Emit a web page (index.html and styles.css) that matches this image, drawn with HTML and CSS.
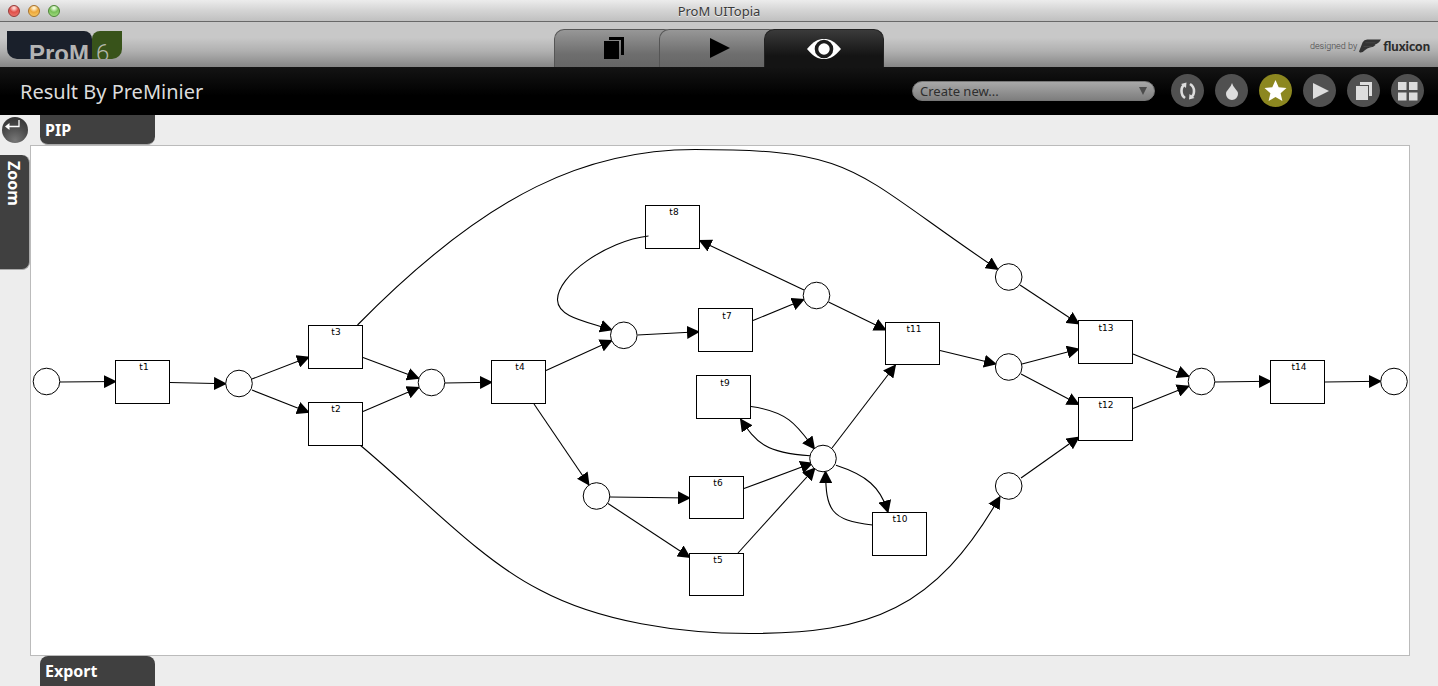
FILE: index.html
```html
<!DOCTYPE html>
<html lang="en">
<head>
<meta charset="utf-8">
<title>ProM UITopia</title>
<link rel="stylesheet" href="styles.css">
</head>
<body>
<div class="titlebar">
  <div class="lights">
    <button class="light red" aria-label="Close"></button>
    <button class="light amber" aria-label="Minimize"></button>
    <button class="light green" aria-label="Zoom window"></button>
  </div>
  <span class="window-title">ProM UITopia</span>
</div>

<header class="header">
  <div class="logo"><span class="logo-name">ProM</span><span class="logo-version">6</span></div>
  <nav class="tabs">
    <button class="tab" aria-label="Workspace">
      <svg width="22" height="24" viewBox="0 0 22 24"><path d="M6 0H21V18H18V3H6Z"/><path d="M1 4H16V22H1Z"/></svg>
    </button>
    <button class="tab" aria-label="Actions">
      <svg width="22" height="22" viewBox="0 0 22 22"><path d="M2 0L22 10L2 20Z"/></svg>
    </button>
    <button class="tab active" aria-label="Views">
      <svg width="36" height="22" viewBox="0 0 36 22"><path fill="#fff" d="M1 11C8 3 12 1 18 1S28 3 35 11C28 19 24 21 18 21S8 19 1 11Z"/><circle cx="18" cy="11" r="7.500" fill="#fff" stroke="#1c1c1c" stroke-width="3.600"/></svg>
    </button>
  </nav>
  <div class="credit">
    <span class="credit-by">designed by</span>
    <svg class="credit-mark" width="24" height="16" viewBox="0 0 24 16"><path fill="#333" d="M0 14L4 4Q5.500 1 9 1H24Q21 6 17 6.500L18 7Q16 9.500 12 9.500Q9 10 6 13Q4 15.500 1 15Z"/><path d="M7 4.500H18M5 8.500H14" stroke="#4c4c4c" stroke-width=".8" fill="none"/></svg>
    <span class="credit-name">fluxicon</span>
  </div>
</header>

<div class="toolbar">
  <h1 class="heading">Result By PreMinier</h1>
  <div class="picker">
    <select class="picker-select" aria-label="Create new"><option>Create new...</option></select>
    <svg class="picker-arrow" width="8" height="8" viewBox="0 0 8 8"><path d="M0 0H8L4 8Z" fill="#4c4c4c"/></svg>
  </div>
  <div class="actions">
    <button class="action" aria-label="Refresh"><svg width="33" height="33" viewBox="0 0 33 33"><g fill="none" stroke="#ddd" stroke-width="2.600"><path d="M14 24Q10.500 21.500 10.500 17T13 11.500"/><path d="M19 10Q23 12.500 23 17T20.500 22.500"/></g><path fill="#ddd" d="M10 10L15.500 8.500L15 14ZM23.500 24L18 25.500L18.500 20Z"/></svg></button>
    <button class="action" aria-label="Filter"><svg width="33" height="33" viewBox="0 0 33 33"><path fill="#ddd" d="M17 9Q18 12.500 20.500 15Q23 17.500 23 20A6 6 0 0 1 11 20Q11 17.500 13.500 15Q16 12.500 17 9Z"/></svg></button>
    <button class="action starred" aria-label="Favorite"><svg width="33" height="33" viewBox="0 0 33 33"><path fill="#fff" d="M16.500 6L19.700 13.300L27.500 14L21.600 19.300L23.400 27L16.500 23L9.600 27L11.400 19.300L5.500 14L13.300 13.300Z"/></svg></button>
    <button class="action" aria-label="Run"><svg width="33" height="33" viewBox="0 0 33 33"><path fill="#ddd" d="M10 9L26 17L10 25Z"/></svg></button>
    <button class="action" aria-label="Show in workspace"><svg width="33" height="33" viewBox="0 0 33 33"><path fill="#ddd" d="M13 8H25V22H22V11H13Z"/><path fill="#ddd" d="M9 12H21V26H9Z"/></svg></button>
    <button class="action" aria-label="All views"><svg width="33" height="33" viewBox="0 0 33 33"><path fill="#ddd" d="M7 8H15.500V16H7ZM18 8H26.500V16H18ZM7 18.500H15.500V26.500H7ZM18 18.500H26.500V26.500H18Z"/></svg></button>
  </div>
</div>

<main class="workspace">
  <button class="back" aria-label="Back"><svg width="26" height="26" viewBox="0 0 26 26"><path d="M17 3V9.500H5" fill="none" stroke="#fff" stroke-width="1.300"/><path d="M3 9.500L7.500 6V13Z" fill="#fff"/></svg></button>
  <button class="drawer pip">PIP</button>
  <button class="drawer zoom"><span>Zoom</span></button>
  <section class="canvas">
    <svg class="net" viewBox="31 146 1378 509" role="img" aria-label="Petri net">
      <defs>
        <marker id="arrow" markerUnits="userSpaceOnUse" markerWidth="13" markerHeight="13" refX="12" refY="6.500" orient="auto"><path d="M0 0L13 6.500L0 13Z"/></marker>
      </defs>
      <g class="arcs">
        <path d="M60 382L116 381.500"/>
        <path d="M170 382.500L226 383.700"/>
        <path d="M252 379L309 357"/>
        <path d="M252 390L309 412.500"/>
        <path d="M363 357.500L419 378.500"/>
        <path d="M363 411.500L419 387.500"/>
        <path d="M445 383L492 382.300"/>
        <path d="M546 370.500L612 340.500"/>
        <path d="M534 404L589 485"/>
        <path d="M637.500 335L699 331.800"/>
        <path d="M753 320.500L804 299.500"/>
        <path d="M804 290L699.500 240.500"/>
        <path d="M828.500 302L886 330"/>
        <path d="M648.500 236C606 241 557 276 557.500 300C558 317 585 321 612 330"/>
        <path d="M751 406.500C790 412 798 427 814.500 449"/>
        <path d="M810 455.700C765 453 756 442 740.500 419"/>
        <path d="M744 488.500L812.500 463"/>
        <path d="M738 553L815 468"/>
        <path d="M832 448L895.500 365"/>
        <path d="M836 465.300C866 475 881 487 888 512.500"/>
        <path d="M872.500 525C830 520 826 510 825.500 471"/>
        <path d="M610 497L690 498"/>
        <path d="M608 503.500L690 557.500"/>
        <path d="M940 350.500L996 364"/>
        <path d="M1022 364L1079 349"/>
        <path d="M1021 374L1079 404.500"/>
        <path d="M1020 285L1079 324"/>
        <path d="M1021 478L1079 437"/>
        <path d="M1133 354L1189 376.500"/>
        <path d="M1133 408.500L1189 386"/>
        <path d="M1215 382L1271 381.300"/>
        <path d="M1325 382L1381 381.300"/>
        <path d="M357.500 325C490 190 590 149.500 695 149.500C860 149.500 850 170 998 269.500"/>
        <path d="M360 445C420 495 480 560 540 590C600 622 680 633.500 750 633.500C870 633.500 935 610 1000 496.500"/>
      </g>
      <g class="places">
        <circle cx="46.500" cy="381.500" r="13.300"/>
        <circle cx="239" cy="383.500" r="13.300"/>
        <circle cx="431.500" cy="382.500" r="13.300"/>
        <circle cx="623.800" cy="335.300" r="13.300"/>
        <circle cx="816.500" cy="295.500" r="13.300"/>
        <circle cx="596.500" cy="496" r="13.300"/>
        <circle cx="823" cy="458.500" r="13.300"/>
        <circle cx="1008.700" cy="277" r="13.300"/>
        <circle cx="1008.700" cy="367" r="13.300"/>
        <circle cx="1008.700" cy="486" r="13.300"/>
        <circle cx="1201.500" cy="381.500" r="13.300"/>
        <circle cx="1394" cy="381.500" r="13.300"/>
      </g>
      <g class="transitions">
        <rect x="115.500" y="360.500" width="54" height="43"/>
        <rect x="308.500" y="402.500" width="54" height="43"/>
        <rect x="308.500" y="325.500" width="54" height="43"/>
        <rect x="491.500" y="360.500" width="54" height="43"/>
        <rect x="689.500" y="553.500" width="54" height="42"/>
        <rect x="689.500" y="476.500" width="54" height="42"/>
        <rect x="698.500" y="308.500" width="54" height="43"/>
        <rect x="645.500" y="205.500" width="54" height="43"/>
        <rect x="696.500" y="375.500" width="54" height="43"/>
        <rect x="872.500" y="512.500" width="54" height="43"/>
        <rect x="885.500" y="322.500" width="54" height="42"/>
        <rect x="1078.500" y="397.500" width="54" height="43"/>
        <rect x="1078.500" y="320.500" width="54" height="43"/>
        <rect x="1270.500" y="360.500" width="54" height="43"/>
      </g>
      <path class="overlap" d="M645 236.500L648.500 236"/>
      <g class="labels">
        <text x="144" y="370">t1</text>
        <text x="336" y="412">t2</text>
        <text x="336" y="335">t3</text>
        <text x="520" y="370">t4</text>
        <text x="718" y="563">t5</text>
        <text x="718" y="486">t6</text>
        <text x="727" y="319">t7</text>
        <text x="674" y="215">t8</text>
        <text x="725" y="386">t9</text>
        <text x="900" y="522">t10</text>
        <text x="914" y="332">t11</text>
        <text x="1106" y="408">t12</text>
        <text x="1106" y="331">t13</text>
        <text x="1299" y="370">t14</text>
      </g>
    </svg>
  </section>
  <button class="drawer export">Export</button>
</main>
</body>
</html>
```
FILE: styles.css
```css
* {
  box-sizing: border-box;
}

body {
  margin: 0;
  min-height: 100vh;
  display: flex;
  flex-direction: column;
  background: #ededed;
  font-family: "Noto Sans", "Open Sans", sans-serif;
}

button {
  margin: 0;
  padding: 0;
  border: 0;
  font: inherit;
}

svg {
  display: block;
}

.titlebar {
  display: grid;
  grid-template-columns: 1fr auto 1fr;
  align-items: center;
  height: 22px;
  padding: 0 8px;
  border-bottom: 1px solid #686868;
  background: linear-gradient(#ececec, #d4d4d4 50%, #c0c0c0);
}

.lights {
  display: flex;
  gap: 8px;
}

.light {
  width: 12px;
  height: 12px;
  border: 1px solid;
  border-radius: 50%;
}

.red {
  border-color: #983a38;
  background: radial-gradient(circle at 50% 20%, #fbd0cc 10%, #e0504a 45%, #ef8078);
}

.amber {
  border-color: #a8722c;
  background: radial-gradient(circle at 50% 20%, #fff0cc 10%, #eda73c 45%, #fbd46e);
}

.green {
  border-color: #4d8536;
  background: radial-gradient(circle at 50% 20%, #e4fad8 10%, #78bf58 45%, #aee68c);
}

.window-title {
  color: #3a3a3a;
  font-size: 13px;
  line-height: 20px;
  text-shadow: 0 1px 0 #eee;
}

.header {
  display: grid;
  grid-template-columns: 1fr auto 1fr;
  height: 45px;
  padding: 0 8px 0 7px;
  background: linear-gradient(#c8c8c8 35%, #b0b0b0 65%, #868686);
}

.logo {
  display: flex;
  height: 28px;
  margin-top: 9px;
  overflow: hidden;
  font-family: "Liberation Sans", sans-serif;
  font-size: 24px;
  line-height: 45px;
}

.logo-name {
  width: 85px;
  padding-left: 22px;
  border-radius: 0 8px 0 10px;
  background: #1a202b;
  color: #b4b4b4;
  font-weight: bold;
}

.logo-version {
  width: 30px;
  padding-left: 4px;
  border-radius: 8px 0 10px 0;
  background: #38531a;
  color: #b4b8ac;
  font-family: Roboto, sans-serif;
  font-weight: 300;
}

.tabs {
  display: flex;
  align-items: flex-end;
}

.tab {
  display: flex;
  justify-content: center;
  align-items: center;
  width: 120px;
  height: 38px;
  border: 1px solid #555;
  border-bottom: 0;
  border-radius: 10px 10px 0 0;
  background: linear-gradient(#979797, #6e6e6e 65%, #666);
}

.tab + .tab {
  margin-left: -15px;
}

.tab.active {
  border-color: #222;
  background: linear-gradient(#3a3a3a, #141414 70%);
}

.credit {
  display: flex;
  justify-content: flex-end;
  align-items: center;
  gap: 2px;
  padding-top: 2px;
  color: #444;
}

.credit-by {
  font-family: Roboto, sans-serif;
  font-size: 9px;
  font-weight: 300;
}

.credit-name {
  color: #2c2c2c;
  font-family: Lato, sans-serif;
  font-size: 13px;
  font-weight: 900;
  line-height: 14px;
}

.credit-mark {
  width: 22px;
}

.toolbar {
  display: flex;
  align-items: center;
  height: 48px;
  padding: 0 14px 0 20px;
  background: linear-gradient(#141414, #000 60%);
}

.heading {
  flex: 1;
  margin: 0;
  padding-top: 2px;
  color: #dcdcdc;
  font-size: 20px;
  font-weight: 400;
  line-height: 28px;
}

.picker {
  position: relative;
  width: 243px;
  margin-right: 16px;
}

.picker-select {
  display: block;
  width: 100%;
  height: 20px;
  padding: 0 24px 0 7px;
  border: 1px solid #777;
  border-radius: 10px;
  appearance: none;
  background: linear-gradient(#a8a8a8, #7e7e7e);
  color: #2e2e2e;
  font-family: inherit;
  font-size: 13px;
  line-height: 18px;
}

.picker-arrow {
  position: absolute;
  top: 6px;
  right: 8px;
  pointer-events: none;
}

.actions {
  display: flex;
  gap: 11px;
}

.action {
  width: 33px;
  height: 33px;
  margin-bottom: 1px;
  border-radius: 50%;
  background: #505050;
}

.action.starred {
  background: #8c8720;
}

.workspace {
  flex: 1;
  display: grid;
  grid-template-columns: 30px 1fr 28px;
  grid-template-rows: 30px 1fr 30px;
}

.back {
  width: 26px;
  height: 26px;
  margin: 2px;
  border-radius: 50%;
  background: radial-gradient(circle at 50% 90%, #777, #4c4c4c 50%, #2c2c2c);
}

.drawer {
  background: #404040;
  color: #fff;
  font-size: 16px;
  font-weight: 700;
  text-align: left;
}

.pip,
.export {
  width: 115px;
  height: 30px;
  margin-left: 10px;
  padding-left: 5px;
  grid-column: 2;
}

.pip {
  border-bottom: 1px solid #aaa;
  border-radius: 0 0 8px 8px;
}

.export {
  grid-row: 3;
  border-radius: 8px 8px 0 0;
}

.zoom {
  grid-column: 1;
  grid-row: 2;
  display: flex;
  justify-content: center;
  align-items: flex-start;
  width: 30px;
  height: 115px;
  margin-top: 10px;
  padding: 6px 1px 0 0;
  border-right: 1px solid #aaa;
  border-bottom: 1px solid #aaa;
  border-radius: 0 8px 8px 0;
}

.zoom span {
  writing-mode: vertical-rl;
}

.canvas {
  grid-column: 2;
  grid-row: 2;
  border: 1px solid #bbb;
  background: #fff;
}

.net {
  width: 100%;
  height: auto;
}

.arcs path {
  fill: none;
  stroke: #000;
  stroke-width: 1.1px;
  marker-end: url(#arrow);
}

.places circle,
.transitions rect {
  fill: #fff;
  stroke: #000;
  stroke-width: 1px;
}

.overlap {
  stroke: #000;
  stroke-width: 1px;
}

.labels text {
  fill: #000;
  font-family: "DejaVu Sans", sans-serif;
  font-size: 9px;
  text-anchor: middle;
}
```
